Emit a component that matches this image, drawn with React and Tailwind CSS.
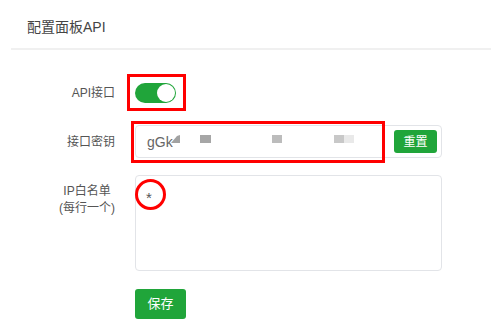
export default function App() {
  return (
    <div className="w-[491px] h-[329px] overflow-hidden bg-white font-['Liberation_Sans','Noto_Sans_CJK_SC',sans-serif] text-[#555]">
      <div className="pl-[11px]">
        <div className="h-[50px] border-b-2 border-[#f0f0f0] pl-[16px] pt-[17px] text-[14px] leading-[20px] text-[#444]">
          配置面板API
        </div>
      </div>

      <div className="flex flex-col">
        {/* API toggle */}
        <div className="mt-[33px] flex h-[20px] items-center">
          <div className="w-[115px] text-right text-[12px]">API接口</div>
          <div className="relative ml-[20px]">
            <div className="flex h-[20px] w-[41px] items-center justify-end rounded-full bg-[#20a53a] pr-[1px]">
              <div className="h-[18px] w-[18px] rounded-full bg-white" />
            </div>
            <div className="absolute left-[-8px] top-[-9px] h-[37px] w-[59px] border-[3px] border-[#f00]" />
          </div>
        </div>

        {/* key */}
        <div className="mt-[22px] flex items-center">
          <div className="w-[115px] text-right text-[12px]">接口密钥</div>
          <div className="relative ml-[20px] flex h-[33px] w-[307px] items-center rounded-[4px] border border-[#e2e4e8] pl-[11px] pr-[4px]">
            <span className="pt-[2px] text-[14px] text-[#666]">gGk</span>
            <svg width="9" height="8" viewBox="0 0 9 8" className="mb-[6px] ml-[-2px]">
              <polygon points="0,8 6,1 9,0 9,8" fill="#a2a2a2" />
            </svg>
            <div className="mb-[6px] ml-[20px] h-[8px] w-[11px] bg-[#a6a6a6]" />
            <div className="mb-[6px] ml-[61px] h-[8px] w-[10px] bg-[#bcbcbc]" />
            <div className="mb-[6px] ml-[52px] h-[8px] w-[10px] bg-[#c8c8c8]" />
            <div className="mb-[6px] h-[8px] w-[10px] bg-[#e9e9e9]" />
            <button className="ml-auto h-[23px] w-[43px] rounded-[3px] bg-[#20a53a] text-[12px] text-white">
              重置
            </button>
            <div className="absolute left-[-5px] top-[-5px] h-[42px] w-[254px] border-[3px] border-[#f00]" />
          </div>
        </div>

        {/* whitelist */}
        <div className="mt-[17px] flex items-start">
          <div className="w-[115px] pt-[8px] text-right text-[12px] leading-[17px]">
            <span className="inline-block text-center">
              IP白名单
              <br />
              (每行一个)
            </span>
          </div>
          <div className="relative ml-[20px]">
            <textarea
              readOnly
              defaultValue="*"
              className="block h-[96px] w-[307px] resize-none rounded-[4px] border border-[#e2e4e8] px-[10px] pt-[12px] text-[15px] leading-[20px] text-[#555] outline-none"
            />
            <div className="absolute left-0 top-[4px] h-[31px] w-[31px] rounded-full border-[3px] border-[#f00]" />
          </div>
        </div>

        {/* save */}
        <div className="mt-[18px] flex">
          <div className="w-[115px]" />
          <button className="ml-[20px] h-[30px] w-[51px] rounded-[3px] bg-[#20a53a] text-[13px] text-white">
            保存
          </button>
        </div>
      </div>
    </div>
  )
}
